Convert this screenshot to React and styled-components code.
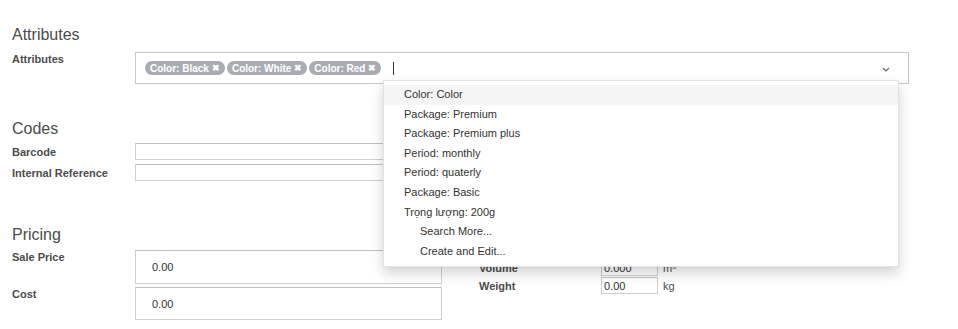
import styled, { createGlobalStyle } from "styled-components";

const GlobalStyle = createGlobalStyle`
  body {
    margin: 0;
    background: #fff;
    font-family: "Liberation Sans", Arial, sans-serif;
    color: #4c4c4c;
  }
`;

const Sheet = styled.div`
  width: 958px;
  height: 329px;
  padding: 25px 12px 0;
  box-sizing: border-box;
  overflow: hidden;
`;

const SectionTitle = styled.h2`
  margin: ${(p) => p.$top || 0}px 0 ${(p) => p.$bottom ?? 7}px;
  font-size: 16px;
  font-weight: normal;
  line-height: 20px;
  color: #4c4c4c;
`;

const Row = styled.div`
  display: flex;
  align-items: ${(p) => (p.$center ? "center" : "flex-start")};
  margin-bottom: ${(p) => p.$gap || 0}px;
`;

const Label = styled.label`
  width: ${(p) => p.$width || 123}px;
  flex: none;
  font-size: 11px;
  font-weight: bold;
  line-height: 14px;
  color: #4c4c4c;
`;

const TagField = styled.div`
  position: relative;
  width: 774px;
  height: 32px;
  box-sizing: border-box;
  border: 1px solid #c8c8c8;
  display: flex;
  align-items: center;
  gap: 2px;
  padding: 0 0 0 9px;
`;

const Tag = styled.span`
  display: inline-flex;
  align-items: center;
  gap: 3px;
  height: 14px;
  padding: 0 5px;
  border-radius: 7px;
  background: #a9adb1;
  color: #fff;
  font-size: 10px;
  font-weight: bold;
  white-space: nowrap;
`;

const Cross = styled.span`
  font-size: 9px;
  line-height: 1;
`;

const Caret = styled.span`
  width: 1px;
  height: 13px;
  background: #333;
  margin-left: 10px;
`;

const Chevron = styled.svg`
  position: absolute;
  right: 18px;
  top: 14px;
`;

const Dropdown = styled.ul`
  position: absolute;
  left: 247px;
  top: 27px;
  width: 514px;
  margin: 0;
  padding: 4px 0 5px;
  list-style: none;
  background: #fff;
  border: 1px solid #e2e2e2;
  box-shadow: 0 6px 12px rgba(0, 0, 0, 0.18);
  z-index: 10;
`;

const Option = styled.li`
  height: 19.6px;
  line-height: 19.6px;
  padding-left: ${(p) => (p.$action ? 36 : 20)}px;
  font-size: 11px;
  color: #333;
  background: ${(p) => (p.$active ? "#f5f5f5" : "transparent")};
`;

const TextInput = styled.div`
  width: ${(p) => p.$width}px;
  height: ${(p) => p.$height}px;
  box-sizing: border-box;
  border: 1px solid #cfcfcf;
  border-top-color: #c0c0c0;
  padding-left: ${(p) => p.$pad || 2}px;
  display: flex;
  align-items: center;
  font-size: 11px;
  color: #333;
`;

const Columns = styled.div`
  display: flex;
  gap: 37px;
`;

const Group = styled.div`
  display: flex;
  flex-direction: column;
  padding-top: ${(p) => p.$top || 0}px;
`;

const Unit = styled.span`
  margin-left: 5px;
  font-size: 11px;
  color: #4c4c4c;
`;

const options = [
  "Color: Color",
  "Package: Premium",
  "Package: Premium plus",
  "Period: monthly",
  "Period: quaterly",
  "Package: Basic",
  "Trọng lượng: 200g",
];

const tags = ["Color: Black", "Color: White", "Color: Red"];

const App = () => {
  return (
    <Sheet>
      <GlobalStyle />
      <SectionTitle>Attributes</SectionTitle>
      <Row>
        <Label>Attributes</Label>
        <TagField>
          {tags.map((t) => (
            <Tag key={t}>
              {t}
              <Cross>✖</Cross>
            </Tag>
          ))}
          <Caret />
          <Chevron width="8" height="5" viewBox="0 0 8 5">
            <path d="M1 1l3 3 3-3" fill="none" stroke="#666" strokeWidth="1.2" />
          </Chevron>
          <Dropdown>
            {options.map((o, i) => (
              <Option key={o} $active={i === 0}>
                {o}
              </Option>
            ))}
            <Option $action>Search More...</Option>
            <Option $action>Create and Edit...</Option>
          </Dropdown>
        </TagField>
      </Row>

      <SectionTitle $top={35} $bottom={4}>
        Codes
      </SectionTitle>
      <Row $center $gap={4}>
        <Label>Barcode</Label>
        <TextInput $width={307} $height={17} />
      </Row>
      <Row $center>
        <Label>Internal Reference</Label>
        <TextInput $width={307} $height={17} />
      </Row>

      <SectionTitle $top={44} $bottom={5}>
        Pricing
      </SectionTitle>
      <Columns>
        <Group>
          <Row $gap={3}>
            <Label>Sale Price</Label>
            <TextInput $width={307} $height={34} $pad={16}>
              0.00
            </TextInput>
          </Row>
          <Row>
            <Label>Cost</Label>
            <TextInput $width={307} $height={33} $pad={16}>
              0.00
            </TextInput>
          </Row>
        </Group>
        <Group $top={10}>
          <Row $center $gap={1}>
            <Label $width={122}>Volume</Label>
            <TextInput $width={57} $height={16}>
              0.000
            </TextInput>
            <Unit>m³</Unit>
          </Row>
          <Row $center>
            <Label $width={122}>Weight</Label>
            <TextInput $width={57} $height={17}>
              0.00
            </TextInput>
            <Unit>kg</Unit>
          </Row>
        </Group>
      </Columns>
    </Sheet>
  );
};

export default App;
